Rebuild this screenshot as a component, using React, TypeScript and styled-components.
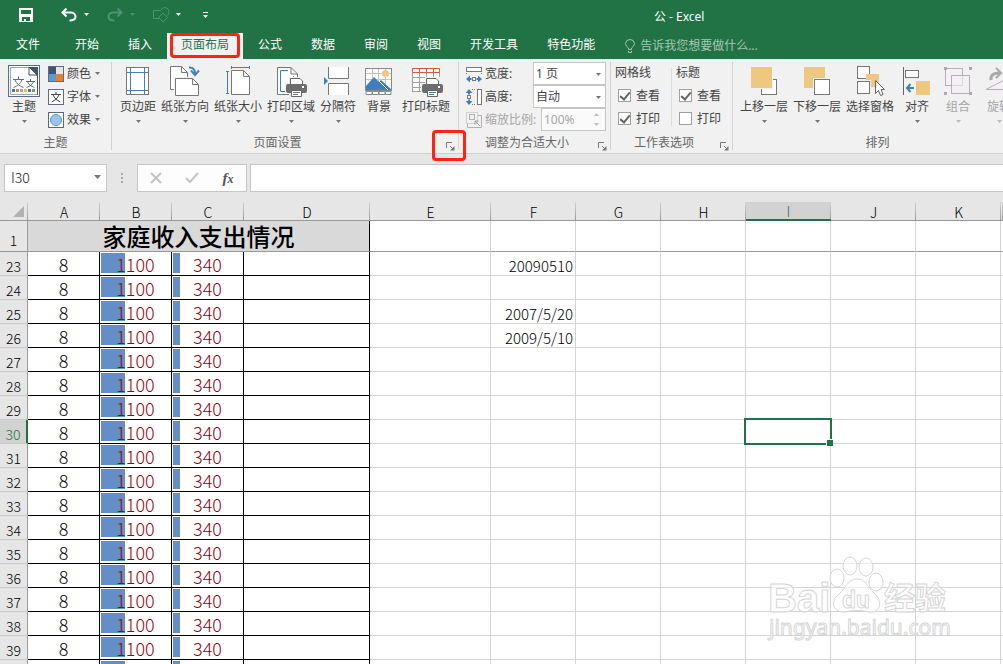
import React from 'react';
import styled, { createGlobalStyle, css } from 'styled-components';

const GREEN = '#217346';
const BLUE = '#3f7fbf';
const GREY = '#777777';
const SAND = '#edc87e';

const GlobalStyle = createGlobalStyle`
  * { box-sizing: border-box; }
  body {
    margin: 0;
    font-family: "Noto Sans", "Noto Sans CJK SC", sans-serif;
    font-size: 12px;
    line-height: 16px;
    color: #444;
  }
  button, input, select { font: inherit; color: inherit; margin: 0; }
`;

const App_ = styled.div`
  display: flex;
  flex-direction: column;
  height: 100vh;
  overflow: hidden;
  background: #e6e6e6;
`;

/* ---------- header ---------- */

const Header = styled.header`
  flex: none;
  background: ${GREEN};
  color: #fff;
`;

const TitleBar = styled.div`
  display: flex;
  align-items: center;
  height: 33px;
`;

const QuickAccess = styled.div`
  display: flex;
  align-items: center;
  gap: 16px;
  flex: 0 0 65%;
  padding: 0 0 4px 18px;
`;

const QuickButton = styled.button<{ $dim?: boolean }>`
  display: flex;
  align-items: center;
  gap: 5px;
  padding: 0;
  border: 0;
  background: none;
  color: ${p => (p.$dim ? '#4f9270' : '#fff')};
`;

const SaveButton = styled(QuickButton)`
  width: 26px;
`;

const CustomizeButton = styled(QuickButton)`
  margin-left: 4px;
`;

const DocTitle = styled.h1`
  margin: 0;
  padding-left: 2px;
  font-size: 12px;
  font-weight: 400;
  white-space: nowrap;
`;

const TabRow = styled.nav`
  display: flex;
  gap: 1px;
  height: 26px;
`;

const Tab = styled.button<{ $active?: boolean }>`
  position: relative;
  padding: 0 14px 2px;
  border: 0;
  white-space: nowrap;
  background: ${p => (p.$active ? '#f1f1f1' : 'transparent')};
  color: ${p => (p.$active ? GREEN : '#fff')};
`;

const FileTab = styled(Tab)`
  width: 60px;
  padding: 0 4px 2px 16px;
  text-align: left;
`;

const TellMe = styled.button`
  display: flex;
  align-items: center;
  gap: 5px;
  margin-left: 15px;
  padding: 0;
  border: 0;
  background: none;
  color: #a3c7b3;
  white-space: nowrap;
`;

const Callout = styled.span<{ $w: number; $h: number }>`
  position: absolute;
  top: 50%;
  left: 50%;
  width: ${p => p.$w}px;
  height: ${p => p.$h}px;
  margin: ${p => -Math.round(p.$h / 2)}px 0 0 ${p => -Math.round(p.$w / 2)}px;
  border: 3px solid #ff2313;
  border-radius: 4px;
  pointer-events: none;
`;

/* ---------- ribbon ---------- */

const Ribbon = styled.div`
  display: flex;
  flex: none;
  position: relative;
  z-index: 2;
  height: 95px;
  padding: 3px 0;
  overflow-x: clip;
  background: #f1f1f1;
  border-bottom: 1px solid #cfcfcf;
`;

const Group = styled.section<{ $w: number; $grow?: boolean }>`
  display: flex;
  flex-direction: column;
  flex: ${p => (p.$grow ? 1 : 0)} 0 ${p => p.$w}px;
  border-right: 1px solid #d2d2d2;
`;

const GroupBody = styled.div<{ $pad?: number; $gap?: number }>`
  display: flex;
  gap: ${p => p.$gap ?? 5}px;
  height: 70px;
  padding: 0 0 0 ${p => p.$pad ?? 7}px;
`;

const GroupFooter = styled.div`
  display: flex;
  height: 18px;
`;

const GroupLabel = styled.span`
  flex: 1;
  line-height: 22px;
  text-align: center;
  color: #666;
`;

const Launcher = styled.button`
  display: flex;
  align-items: center;
  position: relative;
  width: 12px;
  height: 16px;
  margin: 6px 3px 0 0;
  padding: 0 0 0 3px;
  border: 0;
  background: none;
`;

const BigButton = styled.button<{ $off?: boolean }>`
  display: flex;
  flex-direction: column;
  align-items: center;
  flex: none;
  min-width: 36px;
  height: 66px;
  padding: 3px 0 0;
  border: 0;
  background: none;
  white-space: nowrap;
  color: ${p => (p.$off ? '#a6a6a6' : '#444')};
  svg { flex: none; }
`;

const BigLabel = styled.span`
  line-height: 20px;
  margin-bottom: 3px;
`;

const Stack = styled.div`
  display: flex;
  flex-direction: column;
`;

const SmallButton = styled.button`
  display: flex;
  align-items: center;
  gap: 3px;
  height: 23px;
  padding: 0;
  border: 0;
  background: none;
`;

const ScaleRow = styled.div<{ $off?: boolean }>`
  display: flex;
  align-items: center;
  gap: 3px;
  height: 23px;
  color: ${p => (p.$off ? '#a6a6a6' : '#444')};
  label { flex: 1; white-space: nowrap; }
`;

const Field = styled.span<{ $w: number }>`
  display: block;
  position: relative;
  flex: none;
  width: ${p => p.$w}px;
  height: 23px;
  svg { position: absolute; right: 4px; top: 50%; margin-top: -1px; }
`;

const fieldBox = css`
  display: block;
  width: 100%;
  height: 100%;
  padding: 0 2px;
  border: 1px solid #c6c6c6;
  border-radius: 0;
  outline: 0;
  appearance: none;
  background: #fff;
`;

const Select = styled.select`${fieldBox}`;

const PercentInput = styled.input`
  ${fieldBox}
  background: #fafafa;
  color: #a6a6a6;
`;

const Spinner = styled.span`
  position: absolute;
  right: 2px;
  top: 0;
  width: 11px;
  height: 100%;
  svg:first-child { top: 4px; margin: 0; }
  svg:last-child { top: 15px; margin: 0; }
`;

const ScaleStack = styled(Stack)`
  flex: 1;
  padding-right: 4px;
`;

const OptionColumn = styled.fieldset`
  display: flex;
  flex-direction: column;
  width: 56px;
  margin: 0;
  padding: 0;
  border: 0;
`;

const OptionTitle = styled.span`
  line-height: 22px;
`;

const OptionDivider = styled.span`
  width: 1px;
  height: 58px;
  margin: 6px 4px 0 0;
  background: #dcdcdc;
`;

const CheckLabel = styled.label`
  display: flex;
  align-items: center;
  gap: 5px;
  height: 23px;
  padding-left: 3px;
`;

const Check = styled.input`
  appearance: none;
  position: relative;
  flex: none;
  width: 13px;
  height: 13px;
  border: 1px solid #a0a0a0;
  background: #fff;
  &:checked::after {
    content: '';
    position: absolute;
    left: 3px;
    top: 0;
    width: 4px;
    height: 8px;
    border: solid #666;
    border-width: 0 2px 2px 0;
    transform: rotate(40deg);
  }
`;

/* ---------- formula bar ---------- */

const FormulaBar = styled.div`
  display: flex;
  flex: none;
  height: 48px;
  padding: 10px 0 10px 4px;
`;

const NameBox = styled.div`
  position: relative;
  width: 103px;
  height: 28px;
  svg { position: absolute; right: 5px; top: 11px; }
`;

const NameInput = styled.input`
  ${fieldBox}
  padding: 0 6px 2px;
  font-family: "Noto Sans CJK SC", sans-serif;
  font-size: 14px;
  font-weight: 300;
  color: #222;
`;

const Grip = styled.svg`
  width: 30px;
  height: 28px;
`;

const EntryButtons = styled.div`
  display: flex;
  justify-content: space-around;
  width: 110px;
  height: 28px;
  margin-right: 3px;
  border: 1px solid #c6c6c6;
  background: #fdfdfd;
`;

const EntryButton = styled.button`
  display: flex;
  align-items: center;
  justify-content: center;
  width: 36px;
  padding: 0;
  border: 0;
  background: none;
`;

const FxLabel = styled.span`
  font: italic bold 15px/20px "Liberation Serif", serif;
  color: #555;
  small { font-size: 12px; }
`;

const FormulaInput = styled.input`
  ${fieldBox}
  flex: 1;
  width: auto;
  min-width: 0;
  height: 28px;
  border-right: 0;
`;

/* ---------- sheet ---------- */

const Sheet = styled.main`
  position: relative;
  flex: 1;
  min-height: 0;
  overflow: hidden;
`;

const Grid = styled.table`
  width: 100%;
  table-layout: fixed;
  border-collapse: separate;
  border-spacing: 0;
  color: #000;
  font-family: "Noto Sans CJK SC", sans-serif;
  font-size: 15px;
  font-weight: 300;
  td, th { white-space: nowrap; }
`;

const ColHead = styled.th<{ $active?: boolean }>`
  height: 19px;
  padding: 2px 0 0;
  line-height: 15px;
  font-size: 14px;
  font-weight: 300;
  border-bottom: ${p => (p.$active ? `2px solid ${GREEN}` : '1px solid #999')};
  background:
    linear-gradient(#d4d4d4, #999) right / 1px 100% no-repeat,
    ${p => (p.$active ? '#d2d2d2' : '#e6e6e6')};
  color: ${p => (p.$active ? GREEN : '#000')};
`;

const Corner = styled.th`
  height: 19px;
  padding: 0;
  border-bottom: 1px solid #999;
  background: linear-gradient(#d4d4d4, #999) right / 1px 100% no-repeat;
  svg { display: block; margin-left: 13px; }
`;

const RowHead = styled.th<{ $active?: boolean; $frozen?: boolean }>`
  height: ${p => (p.$frozen ? 31 : 24)}px;
  padding: 0;
  vertical-align: bottom;
  line-height: ${p => (p.$frozen ? 22 : 18)}px;
  font-size: 14px;
  font-weight: 300;
  border-right: ${p => (p.$active ? `2px solid ${GREEN}` : '1px solid #999')};
  border-bottom: 1px solid ${p => (p.$frozen ? '#999' : '#c9c9c9')};
  background: ${p => (p.$active ? '#d2d2d2' : '#e6e6e6')};
  color: ${p => (p.$active ? GREEN : '#000')};
`;

const Cell = styled.td<{ $frozen?: boolean }>`
  padding: 0 2px 0 0;
  border-right: 1px solid #d4d4d4;
  border-bottom: 1px solid ${p => (p.$frozen ? '#999' : '#d4d4d4')};
  background: #fff;
  text-align: right;
  vertical-align: bottom;
  line-height: 18px;
`;

const LastCell = styled(Cell)`
  padding: 0;
  border-right: 0;
`;

const BoxCell = styled.td`
  padding: 2px 0 0;
  border-right: 1px solid #000;
  border-bottom: 1px solid #000;
  background: #fff;
  text-align: center;
  font-size: 18px;
  line-height: 21px;
`;

const BarCell = styled(BoxCell)<{ $bar: number }>`
  background: linear-gradient(#638ec6, #638ec6) 1px 1px / ${p => p.$bar}px 20px no-repeat, #fff;
  color: #9c0010;
`;

const TitleCell = styled.td`
  padding: 0;
  border-right: 1px solid #000;
  border-bottom: 1px solid #999;
  background: #d9d9d9;
  text-align: center;
  font-size: 24px;
  font-weight: 500;
  line-height: 30px;
`;

const SelectedCell = styled(Cell)`
  position: relative;
`;

const Selection = styled.span`
  position: absolute;
  inset: -2px;
  z-index: 1;
  border: 2px solid ${GREEN};
  &::after {
    content: '';
    position: absolute;
    right: -3px;
    bottom: -3px;
    width: 6px;
    height: 6px;
    border: solid #fff;
    border-width: 1px 0 0 1px;
    background: ${GREEN};
  }
`;

const Watermark = styled.svg`
  position: absolute;
  right: 48px;
  bottom: 16px;
  width: 190px;
  height: 96px;
  pointer-events: none;
`;

/* ---------- drawings ---------- */

const Caret = ({ color = GREY, up = false }: { color?: string; up?: boolean }) => (
  <svg width="7" height="4" viewBox="0 0 7 4"><path d={up ? 'M1 4L3.500 1L6 4Z' : 'M1 0H6L3.500 3Z'} fill={color} /></svg>
);

const BigIcon = ({ children }: { children: React.ReactNode }) => (
  <svg width="36" height="32" viewBox="0 0 36 32" fill="none" stroke={GREY}>{children}</svg>
);

const SmallIcon = ({ children }: { children: React.ReactNode }) => (
  <svg width="16" height="16" viewBox="0 0 16 16" fill="none" stroke={GREY}>{children}</svg>
);

const Printer = ({ x, y, ink }: { x: number; y: number; ink: string }) => (
  <g transform={`translate(${x} ${y})`}>
    <path d="M3 -1H18V5H22V15H18V19H3V15H-1V5H3Z" fill="#f1f1f1" stroke="none" />
    <path d="M4.500 7V.5H14L16.500 3V7" fill="#fff" stroke="#666" />
    <rect x="0" y="6" width="21" height="9" rx="2" fill="#6d6d6d" stroke="none" />
    <rect x="16" y="8" width="2" height="2" fill="#fff" stroke="none" />
    <path d="M5.500 12.500H15.500V18.500H5.500Z" fill="#fff" stroke="#666" />
    <path d="M7 14.500H14M7 16.500H12" stroke={ink} />
  </g>
);

const icons = {
  theme: (
    <BigIcon>
      <rect x="2.500" y=".5" width="31" height="31" fill="#fff" stroke="#5b6b8c" />
      <path d="M4.500 2.500H23L31.500 11V29.500H4.500Z" fill="#fff" stroke="#9aa5bb" />
      <path d="M23 2H32V30H31V11Z" fill="#44546a" stroke="none" />
      <path d="M23 2V10H31Z" fill="#fff" stroke="#44546a" />
      <path d="M7 14.500H18M12.500 11.500V14.500M9 15Q11 20 17.500 22.500M16 15Q14 20 7.500 22.500" stroke="#5b6b8c" />
      <path d="M20 16.500H29M24.500 14V16.500M21.500 17Q23 21 28.500 22.500M27.500 17Q26 21 20.500 22.500" stroke="#5b6b8c" />
      <g stroke="none">
        <rect x="6" y="24" width="3" height="3" fill={BLUE} /><rect x="10" y="24" width="3" height="3" fill="#ed7d31" />
        <rect x="14" y="24" width="3" height="3" fill="#a5a5a5" /><rect x="18" y="24" width="3" height="3" fill="#ffc000" />
        <rect x="22" y="24" width="3" height="3" fill="#4472c4" /><rect x="26" y="24" width="3" height="3" fill="#70ad47" />
      </g>
    </BigIcon>
  ),
  margins: (
    <BigIcon>
      <rect x="6.500" y="2.500" width="22" height="27" fill="#fff" />
      <path d="M10.500 3V29M24.500 3V29M7 7.500H28M7 25.500H28" stroke={BLUE} />
    </BigIcon>
  ),
  orientation: (
    <BigIcon>
      <path d="M3.500 24.500V1.500H14.500L20.500 7.500V24.500Z" fill="#fff" />
      <path d="M14.500 1.500V7.500H20.500" />
      <path d="M7 12H27L33 18V32H7Z" fill="#f1f1f1" stroke="none" />
      <path d="M8.500 13.500H25.500L31.500 19.500V30.500H8.500Z" fill="#fff" />
      <path d="M25.500 13.500V19.500H31.500" />
      <path d="M22 2.500Q28 2 28 9" stroke={BLUE} strokeWidth="2" /><path d="M24 5.500L28 10L32 5.500" stroke={BLUE} strokeWidth="2" />
    </BigIcon>
  ),
  size: (
    <BigIcon>
      <path d="M11.500 5.500H23.500L29.500 11.500V29.500H11.500Z" fill="#fff" /><path d="M23.500 5.500V11.500H29.500" />
      <path d="M11 2.500H30M11.500 1V4M29.500 1V4M7.500 6V29M6 6.500H9M6 28.500H9" stroke={BLUE} />
    </BigIcon>
  ),
  area: (
    <BigIcon>
      <path d="M4.500 2.500H18L24.500 9V29.500H4.500Z" fill="#fff" /><path d="M18 2.500V9H24.500" />
      <path d="M15 5.500H7.500V26.500H14M20.500 11V14" stroke={BLUE} />
      <Printer x={13} y={13} ink="#777" />
    </BigIcon>
  ),
  breaks: (
    <BigIcon>
      <path d="M8.500 2V13.500H28.500V2Z" fill="#fff" stroke="none" /><path d="M8.500 2V13.500H28.500V2" />
      <path d="M8.500 30V18.500H28.500V30Z" fill="#fff" stroke="none" /><path d="M8.500 30V18.500H28.500V30" />
      <path d="M4 12V20L8 16Z" fill={BLUE} stroke="none" />
    </BigIcon>
  ),
  background: (
    <BigIcon>
      <rect x="4.500" y="3.500" width="26" height="22" fill="#fff" stroke="#8a8a8a" />
      <path d="M11.500 4V25M17.500 4V25M24.500 4V25M5 8.500H30M5 14.500H30" stroke="#c4c4c4" />
      <circle cx="24.500" cy="8.500" r="3.500" fill={SAND} stroke="none" />
      <path d="M5 25V21L13 12L18 17L20 15L30 24V25Z" fill={BLUE} stroke="none" />
      <path d="M18 16L27 25" stroke="#fff" />
      <path d="M5 26.500H11V29.500H5ZM11.500 26.500H17.500V29.500H11.500ZM18 26.500H24V29.500H18ZM24.500 26.500H30V29.500H24.500Z" fill="#fff" stroke="#8a8a8a" />
    </BigIcon>
  ),
  titles: (
    <BigIcon>
      <rect x="4.500" y="3.500" width="27" height="23" fill="#fff" stroke="#a0a0a0" />
      <path d="M5 12.500H31M5 17.500H31M5 22.500H31M11.500 8V26M18.500 8V26M25.500 8V26" stroke="#a0a0a0" />
      <path d="M4.500 3.500H31.500V7.500H4.500ZM11.500 4V7M18.500 4V7M25.500 4V7" fill="#fff" stroke="#d9583a" />
      <Printer x={14} y={13} ink={BLUE} />
    </BigIcon>
  ),
  forward: (
    <BigIcon>
      <rect x="15.500" y="14.500" width="15" height="15" fill="#fff" />
      <rect x="4" y="1" width="23" height="23" fill="#f1f1f1" stroke="none" /><rect x="5" y="2" width="21" height="21" fill={SAND} stroke="none" />
    </BigIcon>
  ),
  backward: (
    <BigIcon>
      <rect x="5" y="2" width="21" height="21" fill={SAND} stroke="none" />
      <rect x="14" y="13" width="18" height="18" fill="#f1f1f1" stroke="none" /><rect x="15.500" y="14.500" width="15" height="15" fill="#fff" />
    </BigIcon>
  ),
  pane: (
    <BigIcon>
      <rect x="5.500" y="1.500" width="12" height="12" fill="#fff" /><rect x="5.500" y="16.500" width="12" height="12" fill="#fff" />
      <path d="M14 9H27V22H19V15H14Z" fill={SAND} stroke="none" />
      <path d="M23.500 15.500V28.500L26.500 25.500L28.500 30.500L31 29.500L29 24.500H32.500Z" fill="#fff" stroke="#666" />
    </BigIcon>
  ),
  align: (
    <BigIcon>
      <path d="M4.500 2V30" stroke="#666" /><rect x="6.500" y="5.500" width="13" height="7" fill="#fff" />
      <rect x="17" y="16" width="14" height="14" fill={SAND} stroke="none" />
      <path d="M8 23H15M11.500 19L8 23L11.500 27" stroke={BLUE} strokeWidth="2" />
    </BigIcon>
  ),
  group: (
    <BigIcon>
      <g stroke="#b5b0b5"><rect x="5.500" y="3.500" width="17" height="17" fill="#f5f0f6" /><rect x="11.500" y="10.500" width="18" height="18" fill="#f5f0f6" fillOpacity=".6" /></g>
      <path d="M4 2H7V5H4ZM29 2H32V5H29ZM4 27H7V30H4ZM29 27H32V30H29Z" fill="#aaa" stroke="none" />
    </BigIcon>
  ),
  rotate: (
    <BigIcon>
      <path d="M5 24.500L31 11V24.500Z" fill="#f5f0f6" stroke="#b5b0b5" />
      <path d="M10 15Q9 8 19 8" stroke="#aaa" strokeWidth="3" /><path d="M15 3L20 8L15 13" stroke="#aaa" strokeWidth="2" />
    </BigIcon>
  ),
  colors: (
    <SmallIcon>
      <g stroke="none"><rect width="8" height="8" fill="#44546a" /><rect x="8" width="8" height="8" fill="#e7e6e6" /><rect y="8" width="8" height="8" fill="#5b9bd5" /><rect x="8" y="8" width="8" height="8" fill="#ed7d31" /></g>
      <rect x=".5" y=".5" width="15" height="15" stroke="#5b6b8c" />
    </SmallIcon>
  ),
  fonts: (
    <SmallIcon>
      <rect x=".5" y=".5" width="15" height="15" fill="#fff" stroke="#5b6b8c" />
      <path d="M3 5.500H13M8 3V5.500M5 6Q7 11 12.500 13M11 6Q9 11 3.500 13" stroke="#444" />
    </SmallIcon>
  ),
  effects: (
    <SmallIcon>
      <rect x=".5" y=".5" width="15" height="15" fill="#fff" stroke="#5b6b8c" /><circle cx="8" cy="8" r="5.500" fill="#9dc3e6" stroke="#5b9bd5" />
    </SmallIcon>
  ),
  width: (
    <SmallIcon>
      <rect x=".5" y="1.500" width="15" height="4" fill="#fff" /><path d="M.5 7V9M15.500 7V9" strokeDasharray="1 1" />
      <rect x="6.500" y="11.500" width="3" height="3" fill="#fff" />
      <path d="M0 13L4 9.500V12H5.500V14H4V16.500ZM16 13L12 9.500V12H10.500V14H12V16.500Z" fill={BLUE} stroke="none" />
    </SmallIcon>
  ),
  height: (
    <SmallIcon>
      <rect x="11.500" y=".5" width="4" height="15" fill="#fff" /><path d="M6 .5H10M6 15.500H10" strokeDasharray="1 1" />
      <rect x="1.500" y="6.500" width="3" height="3" fill="#fff" />
      <path d="M3 0L6.500 4H4V5.500H2V4H-.5ZM3 16L6.500 12H4V10.500H2V12H-.5Z" fill={BLUE} stroke="none" />
    </SmallIcon>
  ),
  scale: (
    <SmallIcon>
      <g stroke="#b0b0b0"><rect x=".5" y=".5" width="11" height="11" strokeDasharray="1 1" /><rect x="3.500" y="2.500" width="5" height="5" />
        <path d="M1.500 12V15.500H15.500V3.500H12" /></g>
      <path d="M14 14L9 9M9 12.500V9H12.500" stroke="#a0a0a0" />
    </SmallIcon>
  ),
};

const LauncherIcon = () => (
  <svg width="9" height="9" viewBox="0 0 9 9" fill="none" stroke="#777"><path d="M.5 6V.5H6M4 4L7 7" /><path d="M8.500 4V8.500H4L8.500 4Z" fill="#777" stroke="none" /></svg>
);

/* ---------- data ---------- */

type Tool = { label: string; icon: React.ReactNode; menu?: boolean; off?: boolean };

const setupTools: Tool[] = [
  { label: '页边距', icon: icons.margins, menu: true },
  { label: '纸张方向', icon: icons.orientation, menu: true },
  { label: '纸张大小', icon: icons.size, menu: true },
  { label: '打印区域', icon: icons.area, menu: true },
  { label: '分隔符', icon: icons.breaks, menu: true },
  { label: '背景', icon: icons.background },
  { label: '打印标题', icon: icons.titles },
];

const arrangeTools: Tool[] = [
  { label: '上移一层', icon: icons.forward, menu: true },
  { label: '下移一层', icon: icons.backward, menu: true },
  { label: '选择窗格', icon: icons.pane },
  { label: '对齐', icon: icons.align, menu: true },
  { label: '组合', icon: icons.group, menu: true, off: true },
  { label: '旋转', icon: icons.rotate, menu: true, off: true },
];

const tabs = ['开始', '插入', '页面布局', '公式', '数据', '审阅', '视图', '开发工具', '特色功能'];
const columns = ['A', 'B', 'C', 'D', 'E', 'F', 'G', 'H', 'I', 'J', 'K'];
const plainColumns = columns.slice(4);
const widths = [28, 72, 72, 72, 126, 121, 85, 85, 85, 85, 85, 85];
const rows = Array.from({ length: 18 }, (_, i) => 23 + i);
const dates: Record<number, string> = { 23: '20090510', 25: '2007/5/20', 26: '2009/5/10' };

const ToolButton = ({ tool }: { tool: Tool }) => (
  <BigButton $off={tool.off}>
    {tool.icon}
    <BigLabel>{tool.label}</BigLabel>
    {tool.menu && <Caret color={tool.off ? '#bbb' : GREY} />}
  </BigButton>
);

const Footer = ({ label, launcher, marked }: { label: string; launcher?: boolean; marked?: boolean }) => (
  <GroupFooter>
    <GroupLabel>{label}</GroupLabel>
    {launcher && (
      <Launcher aria-label={label}>
        <LauncherIcon />
        {marked && <Callout $w={34} $h={31} />}
      </Launcher>
    )}
  </GroupFooter>
);

const Options = ({ title, print }: { title: string; print: boolean }) => (
  <OptionColumn>
    <OptionTitle>{title}</OptionTitle>
    <CheckLabel><Check type="checkbox" defaultChecked />查看</CheckLabel>
    <CheckLabel><Check type="checkbox" defaultChecked={print} />打印</CheckLabel>
  </OptionColumn>
);

export default function App() {
  return (
    <App_>
      <GlobalStyle />
      <Header>
        <TitleBar>
          <QuickAccess>
            <SaveButton aria-label="保存">
              <svg width="16" height="16" viewBox="0 0 16 16"><path d="M1 1H15V15H1ZM3 3V7H13V3ZM4 10V14H6V12H8V14H12V10Z" fill="currentColor" fillRule="evenodd" /></svg>
            </SaveButton>
            <QuickButton aria-label="撤消">
              <svg width="18" height="16" viewBox="0 0 18 16" fill="none" stroke="currentColor" strokeWidth="2"><path d="M6.500 1.500L2.500 5.500L6.500 9.500M3 5.500H11Q15.500 6 15.500 10Q15 13.500 9.500 13.500" /></svg>
              <Caret color="#fff" />
            </QuickButton>
            <QuickButton $dim aria-label="恢复">
              <svg width="18" height="16" viewBox="0 0 18 16" fill="none" stroke="currentColor" strokeWidth="2"><path d="M11.500 1.500L15.500 5.500L11.500 9.500M15 5.500H7Q2.500 6 2.500 10Q3 13.500 8.500 13.500" /></svg>
              <Caret color="#4f9270" />
            </QuickButton>
            <QuickButton $dim aria-label="形状">
              <svg width="18" height="16" viewBox="0 0 18 16" fill="none" stroke="currentColor"><path d="M7 11.500H1.500V3.500H8.500M8.500 3.500Q10 .5 13 .5Q17 1 17 5Q17 7 15.500 8.500M11 6L15.500 10.500L11 15L6.500 10.500Z" /></svg>
              <Caret color="#fff" />
            </QuickButton>
            <CustomizeButton aria-label="自定义">
              <svg width="7" height="8" viewBox="0 0 7 8" fill="#fff"><path d="M1 1H6V2H1ZM1 4H6L3.500 7Z" /></svg>
            </CustomizeButton>
          </QuickAccess>
          <DocTitle>公 - Excel</DocTitle>
        </TitleBar>
        <TabRow>
          <FileTab>文件</FileTab>
          {tabs.map(t => (
            <Tab key={t} $active={t === '页面布局'}>
              {t}
              {t === '页面布局' && <Callout $w={70} $h={25} />}
            </Tab>
          ))}
          <TellMe>
            <svg width="10" height="14" viewBox="0 0 10 14" fill="none" stroke="currentColor"><path d="M3.500 10.500V9Q.5 7 .5 4.500Q1 .5 5 .5Q9 .5 9.500 4.500Q9.500 7 6.500 9V10.500ZM3.500 12V13.500H6.500V12" /></svg>
            告诉我您想要做什么...
          </TellMe>
        </TabRow>
      </Header>

      <Ribbon>
        <Group $w={112}>
          <GroupBody $pad={6} $gap={6}>
            <ToolButton tool={{ label: '主题', icon: icons.theme, menu: true }} />
            <Stack>
              <SmallButton>{icons.colors}颜色<Caret /></SmallButton>
              <SmallButton>{icons.fonts}字体<Caret /></SmallButton>
              <SmallButton>{icons.effects}效果<Caret /></SmallButton>
            </Stack>
          </GroupBody>
          <Footer label="主题" />
        </Group>
        <Group $w={347}>
          <GroupBody $pad={8}>{setupTools.map(t => <ToolButton key={t.label} tool={t} />)}</GroupBody>
          <Footer label="页面设置" launcher marked />
        </Group>
        <Group $w={152}>
          <GroupBody>
            <ScaleStack>
              <ScaleRow>
                {icons.width}<label htmlFor="fit-width">宽度:</label>
                <Field $w={73}><Select id="fit-width"><option>1 页</option></Select><Caret /></Field>
              </ScaleRow>
              <ScaleRow>
                {icons.height}<label htmlFor="fit-height">高度:</label>
                <Field $w={73}><Select id="fit-height"><option>自动</option></Select><Caret /></Field>
              </ScaleRow>
              <ScaleRow $off>
                {icons.scale}<label htmlFor="fit-scale">缩放比例:</label>
                <Field $w={65}>
                  <PercentInput id="fit-scale" defaultValue="100%" disabled />
                  <Spinner><Caret up color="#bbb" /><Caret color="#bbb" /></Spinner>
                </Field>
              </ScaleRow>
            </ScaleStack>
          </GroupBody>
          <Footer label="调整为合适大小" launcher />
        </Group>
        <Group $w={122}>
          <GroupBody $pad={4} $gap={0}>
            <Options title="网格线" print />
            <OptionDivider />
            <Options title="标题" print={false} />
          </GroupBody>
          <Footer label="工作表选项" launcher />
        </Group>
        <Group $w={290} $grow>
          <GroupBody>{arrangeTools.map(t => <ToolButton key={t.label} tool={t} />)}</GroupBody>
          <Footer label="排列" />
        </Group>
      </Ribbon>

      <FormulaBar>
        <NameBox>
          <NameInput aria-label="名称框" defaultValue="I30" />
          <svg width="9" height="5" viewBox="0 0 9 5"><path d="M1 0H8L4.500 4Z" fill="#777" /></svg>
        </NameBox>
        <Grip viewBox="0 0 30 28"><path d="M14 9H16V11H14ZM14 13H16V15H14ZM14 17H16V19H14Z" fill="#aaa" /></Grip>
        <EntryButtons>
          <EntryButton aria-label="取消">
            <svg width="12" height="12" viewBox="0 0 12 12" stroke="#c4c4c4" strokeWidth="2"><path d="M1 1L11 11M11 1L1 11" /></svg>
          </EntryButton>
          <EntryButton aria-label="输入">
            <svg width="14" height="12" viewBox="0 0 14 12" fill="none" stroke="#c4c4c4" strokeWidth="2"><path d="M1 6L5 10L13 1" /></svg>
          </EntryButton>
          <EntryButton aria-label="插入函数"><FxLabel>f<small>x</small></FxLabel></EntryButton>
        </EntryButtons>
        <FormulaInput aria-label="编辑栏" />
      </FormulaBar>

      <Sheet>
        <Grid>
          <colgroup>
            {widths.map((w, i) => <col key={i} width={w} />)}
            <col />
          </colgroup>
          <thead>
            <tr>
              <Corner><svg width="12" height="11" viewBox="0 0 12 11"><path d="M11 0V11H0Z" fill="#b2b2b2" /></svg></Corner>
              {columns.map(c => <ColHead key={c} scope="col" $active={c === 'I'}>{c}</ColHead>)}
              <ColHead />
            </tr>
          </thead>
          <tbody>
            <tr>
              <RowHead scope="row" $frozen>1</RowHead>
              <TitleCell colSpan={4}>家庭收入支出情况</TitleCell>
              {plainColumns.map(c => <Cell key={c} $frozen />)}
              <LastCell $frozen />
            </tr>
            {rows.map(r => (
              <tr key={r}>
                <RowHead scope="row" $active={r === 30}>{r}</RowHead>
                <BoxCell>8</BoxCell>
                <BarCell $bar={24}>1100</BarCell>
                <BarCell $bar={7}>340</BarCell>
                <BoxCell />
                {plainColumns.map(c =>
                  c === 'I' && r === 30
                    ? <SelectedCell key={c}><Selection /></SelectedCell>
                    : <Cell key={c}>{c === 'F' ? dates[r] : null}</Cell>
                )}
                <LastCell />
              </tr>
            ))}
          </tbody>
        </Grid>
        <Watermark viewBox="0 0 190 96" fill="#fff" fillOpacity=".6" stroke="#d6d6d6">
          <text x="3" y="60" fontFamily="Liberation Sans" fontWeight="700" fontSize="40">Bai</text>
          <path d="M92 27C83 27 81 36 74 42C64 50 69 61 80 60C88 58 96 58 104 60C116 62 118 48 109 41C102 35 101 27 92 27Z" />
          <ellipse cx="72" cy="26" rx="7" ry="9" /><ellipse cx="85" cy="14" rx="7" ry="9" />
          <ellipse cx="101" cy="15" rx="7" ry="9" /><ellipse cx="111" cy="30" rx="7" ry="9" />
          <text x="77" y="56" fontFamily="Liberation Sans" fontWeight="700" fontSize="23">du</text>
          <text x="119" y="57" fontFamily="Noto Sans CJK SC" fontWeight="700" fontSize="31">经验</text>
          <text x="4" y="83" fontFamily="Noto Sans" fontSize="21">jingyan.baidu.com</text>
        </Watermark>
      </Sheet>
    </App_>
  );
}
